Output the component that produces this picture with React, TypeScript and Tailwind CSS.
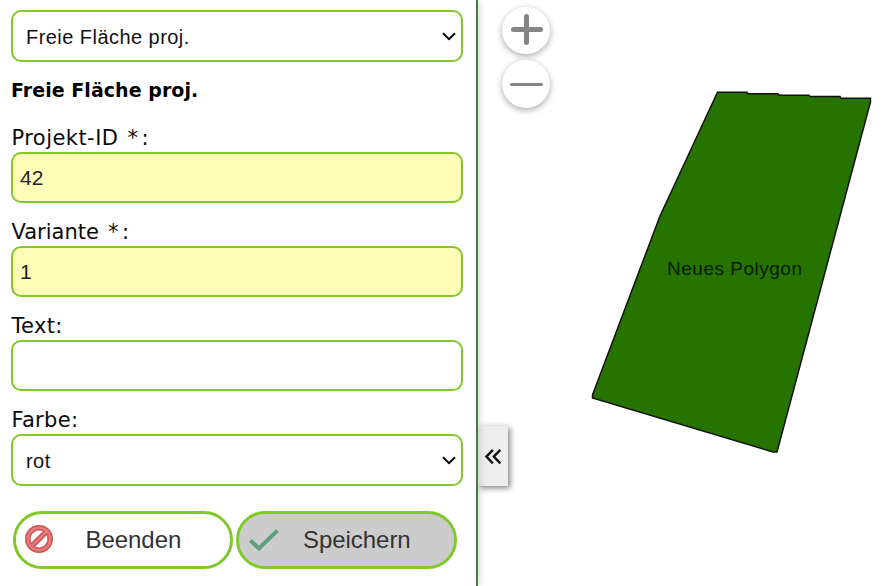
import type { ReactNode } from "react";

function Chevron() {
  return (
    <svg className="h-[10px] w-[14px] shrink-0" viewBox="0 0 14 10" fill="none" stroke="#000" strokeWidth="2">
      <path d="M1 2.3 7 8.2l6-5.9" />
    </svg>
  );
}

function Select({ value }: { value: string }) {
  return (
    <button className="flex h-[52px] w-full items-center justify-between rounded-[10px] border-2 border-[#80c928] bg-white pr-[5px] pl-[13px] text-left font-['Liberation_Sans',Arial,sans-serif] text-[20px] text-[#111]">
      <span className="pt-[2px] tracking-[0.45px]">{value}</span>
      <Chevron />
    </button>
  );
}

function Label({ children }: { children: ReactNode }) {
  return (
    <div className="h-[30px] pt-px pl-[0.5px] text-[21px] leading-[30px] tracking-[0.3px] whitespace-pre text-[#0a0a0a]">
      {children}
    </div>
  );
}

function Field({
  label,
  value,
  required,
  spacing = "",
}: {
  label: string;
  value: string;
  required?: boolean;
  spacing?: string;
}) {
  return (
    <div className="mb-[13px]">
      <Label>
        <span className={spacing}>{label}</span>
        {required && <span className="ml-[6px] inline-block w-[17px] text-center">*</span>}:
      </Label>
      <input
        readOnly
        value={value}
        className={`block h-[51px] w-full rounded-[10px] border-2 border-[#80c928] px-[7px] font-['Liberation_Sans',Arial,sans-serif] text-[21px] text-[#222] outline-none ${required ? "bg-[#fffdb8]" : "bg-white"}`}
      />
    </div>
  );
}

export default function App() {
  return (
    <div className="flex h-[586px] w-[895px] overflow-hidden bg-white font-['DejaVu_Sans',Verdana,sans-serif] text-black">
      <aside className="z-10 w-[478px] shrink-0 border-r-2 border-[#408040] bg-white pt-[10px] pr-[13px] pl-[11px] shadow-[1px_0_8px_rgba(0,0,0,0.18)]">
        <Select value="Freie Fläche proj." />
        <h1 className="mt-[13px] mb-[17px] h-[30px] text-[19px] leading-[30px] font-bold tracking-[0.05px]">
          Freie Fläche proj.
        </h1>
        <Field label="Projekt-ID" value="42" required spacing="tracking-[0.45px]" />
        <Field label="Variante" value="1" required spacing="tracking-[0px]" />
        <Field label="Text" value="" />
        <Label>Farbe:</Label>
        <Select value="rot" />
        <div className="mt-[25px] ml-[2px] flex gap-[3px] font-['Liberation_Sans',Arial,sans-serif] text-[24px] text-[#333]">
          <button className="flex h-[58px] w-[220px] items-center rounded-[29px] border-3 border-[#80c928] bg-white pl-[9px]">
            <svg className="mt-[-2px] size-[28px]" viewBox="0 0 28 28" fill="none">
              <circle cx="14" cy="14" r="11.2" stroke="#d05454" strokeWidth="5.6" />
              <path d="M22 6 6 22" stroke="#d05454" strokeWidth="5.4" />
              <circle cx="14" cy="14" r="11.2" stroke="#e87b7b" strokeWidth="2.4" />
              <path d="M22 6 6 22" stroke="#e87b7b" strokeWidth="2.4" />
            </svg>
            <span className="ml-[32.5px] tracking-[-0.05px]">Beenden</span>
          </button>
          <button className="flex h-[58px] w-[221px] items-center rounded-[29px] border-3 border-[#80c928] bg-[#ccc] pl-[10px]">
            <svg className="h-[24px] w-[30px]" viewBox="0 0 30 24" fill="none" stroke="#5f9f79" strokeWidth="4">
              <path d="M1.5 12.5 10 20.5 28.5 2.5" />
            </svg>
            <span className="ml-[24px] tracking-[-0.05px]">Speichern</span>
          </button>
        </div>
      </aside>
      <main className="relative flex-1">
        <svg className="block h-[586px] w-[417px]" viewBox="478 0 417 586">
          <path
            d="M717.5 92.2H747L748 93.7H778L779 95.2H809L810 96.6H840L841 98.3H870.5V102L777 452H773L592.5 398V395L660 216Z"
            fill="#277300"
            stroke="#111"
            strokeWidth="1.5"
          />
          <text
            x="667"
            y="274.5"
            textLength="135"
            fontSize="19"
            fill="#061c00"
            className="font-['Liberation_Sans',Arial,sans-serif]"
          >
            Neues Polygon
          </text>
        </svg>
        <div className="absolute top-[7px] left-[24px] flex flex-col gap-[6px]">
          <button className="flex h-[47px] w-[48px] items-center justify-center rounded-full bg-white shadow-[0_2px_6px_rgba(0,0,0,0.35)]">
            <svg className="h-[47px] w-[48px]" viewBox="0 0 48 47" stroke="#858585" strokeWidth="5" strokeLinecap="round">
              <path d="M11.5 22.5h27M24.5 9.5v26" />
            </svg>
          </button>
          <button className="flex size-[48px] items-center justify-center rounded-full bg-white shadow-[0_2px_6px_rgba(0,0,0,0.35)]">
            <svg className="size-[48px]" viewBox="0 0 48 48" stroke="#858585" strokeWidth="3" strokeLinecap="round">
              <path d="M9.5 24.5h30" />
            </svg>
          </button>
        </div>
        <button className="absolute top-[426px] left-0 flex h-[60px] w-[30px] items-center justify-center bg-[#eee] shadow-[2px_2px_6px_rgba(0,0,0,0.5)]">
          <svg className="h-[16px] w-[18px]" viewBox="0 0 18 16" fill="none" stroke="#111" strokeWidth="2.4">
            <path d="M8.9 1.8 2.4 8.6l6.5 6.8M16.3 1.8 9.8 8.6l6.5 6.8" />
          </svg>
        </button>
      </main>
    </div>
  );
}
